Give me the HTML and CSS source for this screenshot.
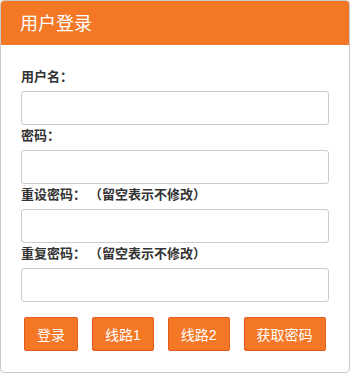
FILE: index.html
```html
<!DOCTYPE html>
<html lang="zh-CN">
<head>
    <meta charset="UTF-8">
    <meta name="viewport" content="width=device-width, initial-scale=1.0">
    <title>用户登录</title>
    <link rel="stylesheet" href="styles.css">
</head>
<body>
    <div class="panel">
        <div class="panel-heading">用户登录</div>

        <div class="panel-body">
            <label for="username">用户名：</label>
            <input type="text" id="username">

            <label for="password">密码：</label>
            <input type="password" id="password">

            <label for="newpass">重设密码： （留空表示不修改）</label>
            <input type="password" id="newpass">

            <label for="repass">重复密码： （留空表示不修改）</label>
            <input type="password" id="repass">

            <div class="actions">
                <button>登录</button>
                <button>线路1</button>
                <button>线路2</button>
                <button>获取密码</button>
            </div>
        </div>
    </div>
</body>
</html>
```

FILE: styles.css
```css
body {
    margin: 0;
    font-family: "Noto Sans CJK SC", "Liberation Sans", sans-serif;
    color: #333;
    background: #ffffff;
}

.panel {
    width: 350px;
    height: 373px;
    box-sizing: border-box;
    border: 1px solid #c9c9c9;
    border-radius: 4px;
    background: #ffffff;
    overflow: hidden;
}

.panel-heading {
    height: 45px;
    margin: -1px -1px 0;
    padding-left: 20px;
    background: #f47726;
    color: #ffffff;
    font-size: 18px;
    line-height: 45px;
}

.panel-body {
    padding: 21px 20px 0;
}

label {
    display: block;
    font-size: 13px;
    font-weight: bold;
    line-height: 20px;
    margin-bottom: 5px;
}

input[type="text"],
input[type="password"] {
    display: block;
    width: 100%;
    height: 34px;
    box-sizing: border-box;
    margin: 0;
    padding: 6px 10px;
    border: 1px solid #cccccc;
    border-radius: 3px;
    font-size: 14px;
}

.actions {
    display: flex;
    gap: 14px;
    margin-top: 15px;
    padding-left: 3px;
}

button {
    height: 34px;
    padding: 0 12px;
    background-color: #f47726;
    color: #ffffff;
    border: 1px solid #e5591f;
    border-radius: 2px;
    font-family: "Liberation Sans", "Noto Sans CJK SC", sans-serif;
    font-size: 14px;
    cursor: pointer;
}
```
